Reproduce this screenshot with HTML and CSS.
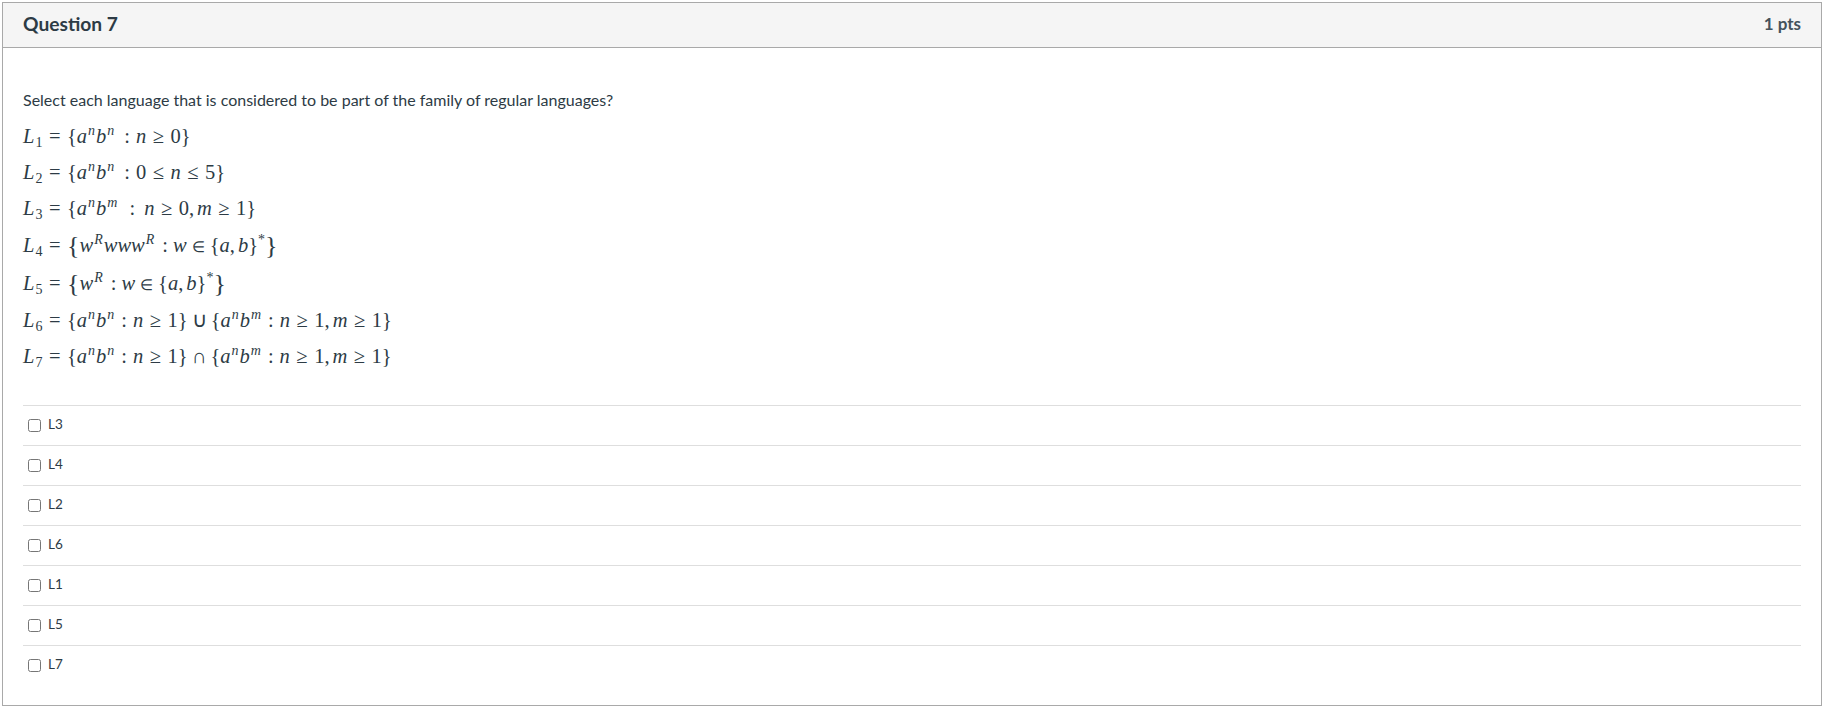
FILE: index.html
```html
<!DOCTYPE html>
<html lang="en">
<head>
<meta charset="utf-8">
<title>Question 7</title>
<link rel="stylesheet" href="styles.css">
</head>
<body>
<section class="card">
  <header class="head">
    <h2 class="title">Question 7</h2>
    <div class="pts">1 pts</div>
  </header>
  <div class="body">
    <p class="prompt">Select each language that is considered to be part of the family of regular languages?</p>
    <p class="math"><i>L</i><sub>1</sub><span class="rel">=</span>{<i>a</i><sup><i>n</i></sup><i>b</i><sup><i>n</i></sup><span class="col">:</span><i>n</i><span class="rel">≥</span>0}</p>
    <p class="math"><i>L</i><sub>2</sub><span class="rel">=</span>{<i>a</i><sup><i>n</i></sup><i>b</i><sup><i>n</i></sup><span class="col">:</span>0<span class="rel">≤</span><i>n</i><span class="rel">≤</span>5}</p>
    <p class="math"><i>L</i><sub>3</sub><span class="rel">=</span>{<i>a</i><sup><i>n</i></sup><i>b</i><sup><i>m</i></sup><span class="col wide">:</span><i>n</i><span class="rel">≥</span>0,<span class="thin"></span><i>m</i><span class="rel">≥</span>1}</p>
    <p class="math tall"><i>L</i><sub>4</sub><span class="rel">=</span><span class="big">{</span><i>w</i><sup><i>R</i></sup><i>www</i><sup><i>R</i></sup><span class="col">:</span><i>w</i><span class="rel small">∈</span>{<i>a</i>,<span class="thin"></span><i>b</i>}<sup class="star">*</sup><span class="big">}</span></p>
    <p class="math tall"><i>L</i><sub>5</sub><span class="rel">=</span><span class="big">{</span><i>w</i><sup><i>R</i></sup><span class="col">:</span><i>w</i><span class="rel small">∈</span>{<i>a</i>,<span class="thin"></span><i>b</i>}<sup class="star">*</sup><span class="big">}</span></p>
    <p class="math"><i>L</i><sub>6</sub><span class="rel">=</span>{<i>a</i><sup><i>n</i></sup><i>b</i><sup><i>n</i></sup><span class="col tight">:</span><i>n</i><span class="rel">≥</span>1}<span class="bin">∪</span>{<i>a</i><sup><i>n</i></sup><i>b</i><sup><i>m</i></sup><span class="col tight">:</span><i>n</i><span class="rel">≥</span>1,<span class="thin"></span><i>m</i><span class="rel">≥</span>1}</p>
    <p class="math"><i>L</i><sub>7</sub><span class="rel">=</span>{<i>a</i><sup><i>n</i></sup><i>b</i><sup><i>n</i></sup><span class="col tight">:</span><i>n</i><span class="rel">≥</span>1}<span class="bin">∩</span>{<i>a</i><sup><i>n</i></sup><i>b</i><sup><i>m</i></sup><span class="col tight">:</span><i>n</i><span class="rel">≥</span>1,<span class="thin"></span><i>m</i><span class="rel">≥</span>1}</p>
    <div class="answers">
      <label class="answer"><input class="check" type="checkbox"><span>L3</span></label>
      <label class="answer"><input class="check" type="checkbox"><span>L4</span></label>
      <label class="answer"><input class="check" type="checkbox"><span>L2</span></label>
      <label class="answer"><input class="check" type="checkbox"><span>L6</span></label>
      <label class="answer"><input class="check" type="checkbox"><span>L1</span></label>
      <label class="answer"><input class="check" type="checkbox"><span>L5</span></label>
      <label class="answer"><input class="check" type="checkbox"><span>L7</span></label>
    </div>
  </div>
</section>
</body>
</html>
```
FILE: styles.css
```css
* { box-sizing: border-box; }
html, body { margin: 0; padding: 0; background: #fff; }
body {
  padding: 2px;
  height: 710px;
  overflow: hidden;
  color: #2d3b45;
  font-family: Lato, "Liberation Sans", sans-serif;
  font-size: 16px;
}
.card {
  height: 704px;
  border: 1px solid #a9a9a9;
}
.head {
  height: 45px;
  padding: 0 20px;
  display: flex;
  align-items: center;
  justify-content: space-between;
  background: #f5f5f5;
  border-bottom: 1px solid #a9a9a9;
}
.title {
  margin: 0 0 4px;
  font-size: 19.2px;
  font-weight: 700;
}
.pts {
  margin-bottom: 3px;
  font-size: 17px;
  font-weight: 700;
  color: #44525c;
}
.body { padding: 0 20px; }
.prompt {
  margin: 0;
  padding-top: 41px;
  line-height: 22px;
  height: 70px;
}
.math {
  margin: 0;
  height: 36px;
  line-height: 36px;
  font-family: "Liberation Serif", serif;
  font-size: 20.5px;
  white-space: nowrap;
}
.math.tall { height: 38px; line-height: 38px; }
.math i { font-style: italic; }
.math sub, .math sup { font-size: 14px; line-height: 0; }
.math sub { vertical-align: -4px; margin-left: 1px; }
.math sup { vertical-align: 8px; margin: 0 1px; }
.math sup.star { margin: 0; }
.rel { margin: 0 6.5px; }
.rel.small { font-size: 15px; margin: 0 5px; }
.bin { margin: 0 4px; }
.col { margin: 0 6px 0 9px; }
.col.wide { margin: 0 9px 0 11px; }
.col.tight { margin: 0 6px; }
.tall .col { margin: 0 5px 0 7px; }
.thin { margin-left: 3px; }
.big {
  display: inline-block;
  font-size: 26px;
  line-height: 0;
  vertical-align: -2px;
  font-weight: 300;
}
.answers { margin-top: 31px; }
.answer {
  height: 40px;
  display: flex;
  align-items: center;
  padding-left: 5px;
  gap: 7px;
  border-top: 1px solid #dedede;
  font-size: 13.5px;
}
.answer span { margin-top: -4px; }
.check {
  appearance: none;
  margin: 0;
  width: 13px;
  height: 13px;
  background: #fff;
  border: 1px solid #767676;
  border-radius: 2.5px;
}
```
